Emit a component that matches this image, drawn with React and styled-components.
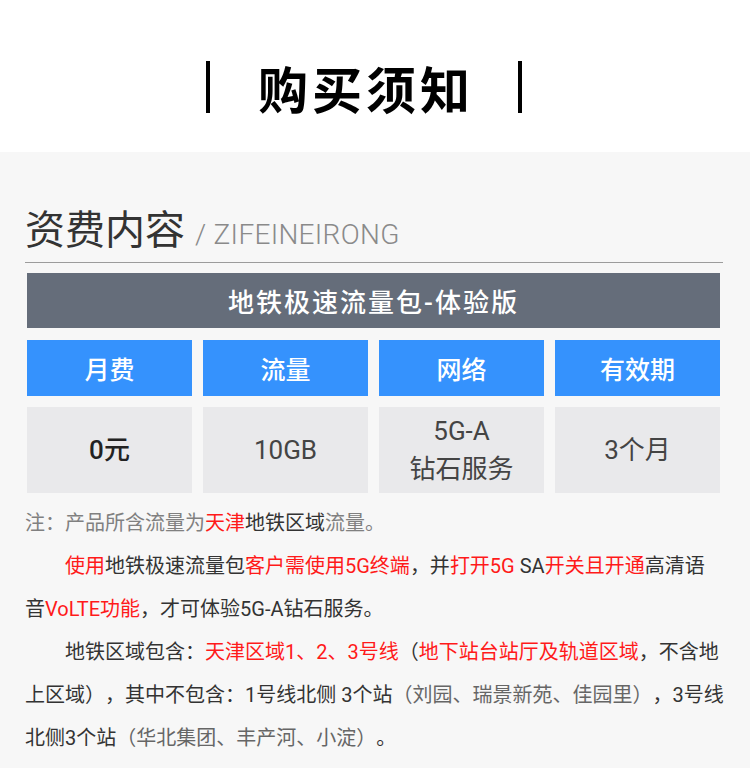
import React from "react";
import styled, { createGlobalStyle } from "styled-components";

const Global = createGlobalStyle`
  html, body { margin: 0; padding: 0; background: #f7f7f7; }
  body { font-family: Roboto, "Noto Sans CJK SC", sans-serif; text-spacing-trim: space-all; }
  * { box-sizing: border-box; }
`;

const Page = styled.div`
  width: 750px;
  min-height: 768px;
  background: #f7f7f7;
`;

const Header = styled.header`
  height: 152px;
  background: #ffffff;
  display: flex;
  align-items: center;
  justify-content: center;
  gap: 48px;
  padding-right: 22px;
  padding-top: 22px;
`;

const Bar = styled.span`
  display: block;
  width: 4px;
  height: 52px;
  background: #000;
`;

const Title = styled.h1`
  margin: 0;
  font-family: "Noto Sans CJK SC", sans-serif;
  font-weight: 700;
  font-size: 50px;
  line-height: 1;
  letter-spacing: 4px;
  margin-right: -4px;
  color: #000;
`;

const Body = styled.main`
  padding: 50px 25px 0 25px;
`;

const Heading = styled.div`
  display: flex;
  align-items: baseline;
  gap: 10px;
  height: 61px;
  padding-top: 1px;
  border-bottom: 1px solid #9c9c9c;
  margin-right: 2px;
`;

const HeadingCn = styled.span`
  font-family: "Noto Sans CJK SC", sans-serif;
  font-size: 40px;
  line-height: 48px;
  color: #333;
  font-weight: 400;
`;

const HeadingEn = styled.span`
  font-family: Roboto, sans-serif;
  font-weight: 300;
  font-size: 28px;
  color: #8a8a8a;
  letter-spacing: 0.3px;
`;

const Table = styled.div`
  width: 693px;
  margin: 10px 0 0 2px;
  display: grid;
  grid-template-columns: repeat(4, 1fr);
  column-gap: 11px;
`;

const PlanName = styled.div`
  grid-column: 1 / -1;
  height: 55px;
  background: #656d7a;
  color: #fff;
  display: flex;
  align-items: center;
  justify-content: center;
  font-size: 26px;
  font-weight: 500;
  letter-spacing: 2px;
  margin-bottom: 12px;
`;

const HeadCell = styled.div`
  height: 56px;
  background: #3592fd;
  color: #fff;
  display: flex;
  align-items: center;
  justify-content: center;
  font-size: 25px;
  font-weight: 500;
  margin-bottom: 11px;
`;

const ValueCell = styled.div`
  height: 86px;
  background: #e9e9eb;
  color: ${(p) => (p.$strong ? "#222" : "#444")};
  font-weight: ${(p) => (p.$strong ? 500 : 400)};
  display: flex;
  flex-direction: column;
  align-items: center;
  justify-content: center;
  font-size: 26px;
  line-height: 38px;
  text-align: center;
`;

const Notes = styled.div`
  margin-top: 9px;
  font-size: 20px;
  line-height: 43px;
  color: #333;
`;

const Para = styled.p`
  margin: 0;
  text-indent: ${(p) => (p.$indent ? "40px" : "0")};
  color: ${(p) => (p.$muted ? "#808080" : "#333")};
`;

const Red = styled.span`
  color: #ff1a1a;
`;

const Dark = styled.span`
  color: #333;
`;

const Soft = styled.span`
  color: #666;
`;

export default function App() {
  return (
    <>
      <Global />
      <Page>
        <Header>
          <Bar />
          <Title>购买须知</Title>
          <Bar />
        </Header>
        <Body>
          <Heading>
            <HeadingCn>资费内容</HeadingCn>
            <HeadingEn>/ ZIFEINEIRONG</HeadingEn>
          </Heading>
          <Table>
            <PlanName>地铁极速流量包-体验版</PlanName>
            <HeadCell>月费</HeadCell>
            <HeadCell>流量</HeadCell>
            <HeadCell>网络</HeadCell>
            <HeadCell>有效期</HeadCell>
            <ValueCell $strong>0元</ValueCell>
            <ValueCell>10GB</ValueCell>
            <ValueCell>
              <span>5G-A</span>
              <span>钻石服务</span>
            </ValueCell>
            <ValueCell>3个月</ValueCell>
          </Table>
          <Notes>
            <Para $muted>
              注：产品所含流量为<Red>天津</Red>
              <Dark>地铁区域</Dark>流量。
            </Para>
            <Para $indent>
              <Red>使用</Red>地铁极速流量包<Red>客户需使用5G终端</Red>，并
              <Red>打开5G</Red> SA<Red>开关且开通</Red>高清语
              <br />
              音<Red>VoLTE功能</Red>，才可体验5G-A钻石服务。
            </Para>
            <Para $indent>
              地铁区域包含：<Red>天津区域1、2、3号线</Red>（
              <Red>地下站台站厅及轨道区域</Red>，不含地上区域），其中不包含：1号线北侧 3个站
              <Soft>（刘园、瑞景新苑、佳园里）</Soft>，3号线北侧3个站
              <Soft>（华北集团、丰产河、小淀）</Soft>。
            </Para>
          </Notes>
        </Body>
      </Page>
    </>
  );
}
